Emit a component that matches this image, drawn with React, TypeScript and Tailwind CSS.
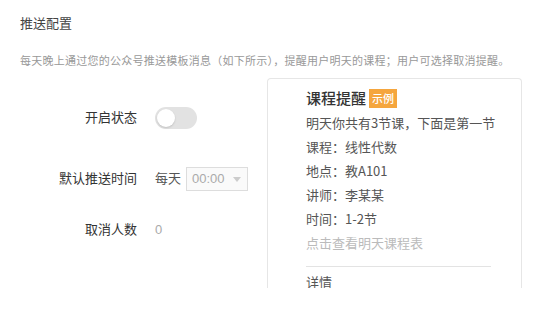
const cardLines = [
  "明天你共有3节课，下面是第一节",
  "课程：线性代数",
  "地点：教A101",
  "讲师：李某某",
  "时间：1-2节",
];

function Toggle() {
  return (
    <div className="relative h-[22px] w-[42px] rounded-full bg-[#e2e2e2]">
      <div className="absolute left-[2px] top-[2px] h-[18px] w-[18px] rounded-full bg-white shadow-[0_1px_2px_rgba(0,0,0,0.15)]" />
    </div>
  );
}

export default function App() {
  return (
    <div
      className="h-[319px] w-[554px] overflow-hidden bg-white pl-5"
      style={{ fontFamily: '"Liberation Sans", "Noto Sans CJK SC", sans-serif' }}
    >
      <div className="pt-[15px] text-[13px] leading-[18px] text-[#444]">推送配置</div>
      <div className="mt-[20px] whitespace-nowrap text-[11px] leading-[16px] tracking-[0.25px] text-[#999]">
        每天晚上通过您的公众号推送模板消息（如下所示），提醒用户明天的课程；用户可选择取消提醒。
      </div>

      <div className="mt-[9px] flex">
        <div className="w-[247px] text-[13px]">
          <div className="mt-[29px] flex h-[22px] items-center">
            <div className="w-[117px] text-right text-[#333]">开启状态</div>
            <div className="ml-[18px]">
              <Toggle />
            </div>
          </div>
          <div className="mt-[38px] flex h-[24px] items-center">
            <div className="w-[117px] text-right text-[#333]">默认推送时间</div>
            <div className="ml-[18px] text-[#555]">每天</div>
            <div className="ml-[5px] flex h-[24px] w-[62px] items-center justify-between border border-[#ddd] bg-[#fafafa] pl-[5px] pr-[6px] text-[#aaa]">
              <span>00:00</span>
              <span className="h-0 w-0 border-x-[4px] border-t-[5px] border-x-transparent border-t-[#ccc]" />
            </div>
          </div>
          <div className="mt-[27px] flex h-[24px] items-center">
            <div className="w-[117px] text-right text-[#333]">取消人数</div>
            <div className="ml-[18px] text-[#aaa]">0</div>
          </div>
        </div>

        <div
          className="h-[210px] w-[255px] overflow-hidden rounded-t-[4px] border-x border-t border-[#e6e6e6] pl-[38px] pr-[10px]"
          style={{ fontFamily: '"Noto Sans CJK SC", sans-serif' }}
        >
          <div className="mt-[8px] flex h-[22px] items-center">
            <span className="text-[15px] font-medium text-[#333]">课程提醒</span>
            <span className="ml-[3px] flex h-[19px] items-center bg-[#f5a63e] px-[3px] text-[11px] font-medium text-white">
              示例
            </span>
          </div>
          <div className="mt-[2px] whitespace-nowrap text-[13px] leading-[24px] text-[#555]">
            {cardLines.map((l) => (
              <div key={l}>{l}</div>
            ))}
            <div className="text-[#bbb]">点击查看明天课程表</div>
          </div>
          <div className="mt-[11px] w-[185px] border-t border-[#e3e3e3]" />
          <div className="pt-[3px] text-[13px] leading-[24px] text-[#555]">详情</div>
        </div>
      </div>
    </div>
  );
}
